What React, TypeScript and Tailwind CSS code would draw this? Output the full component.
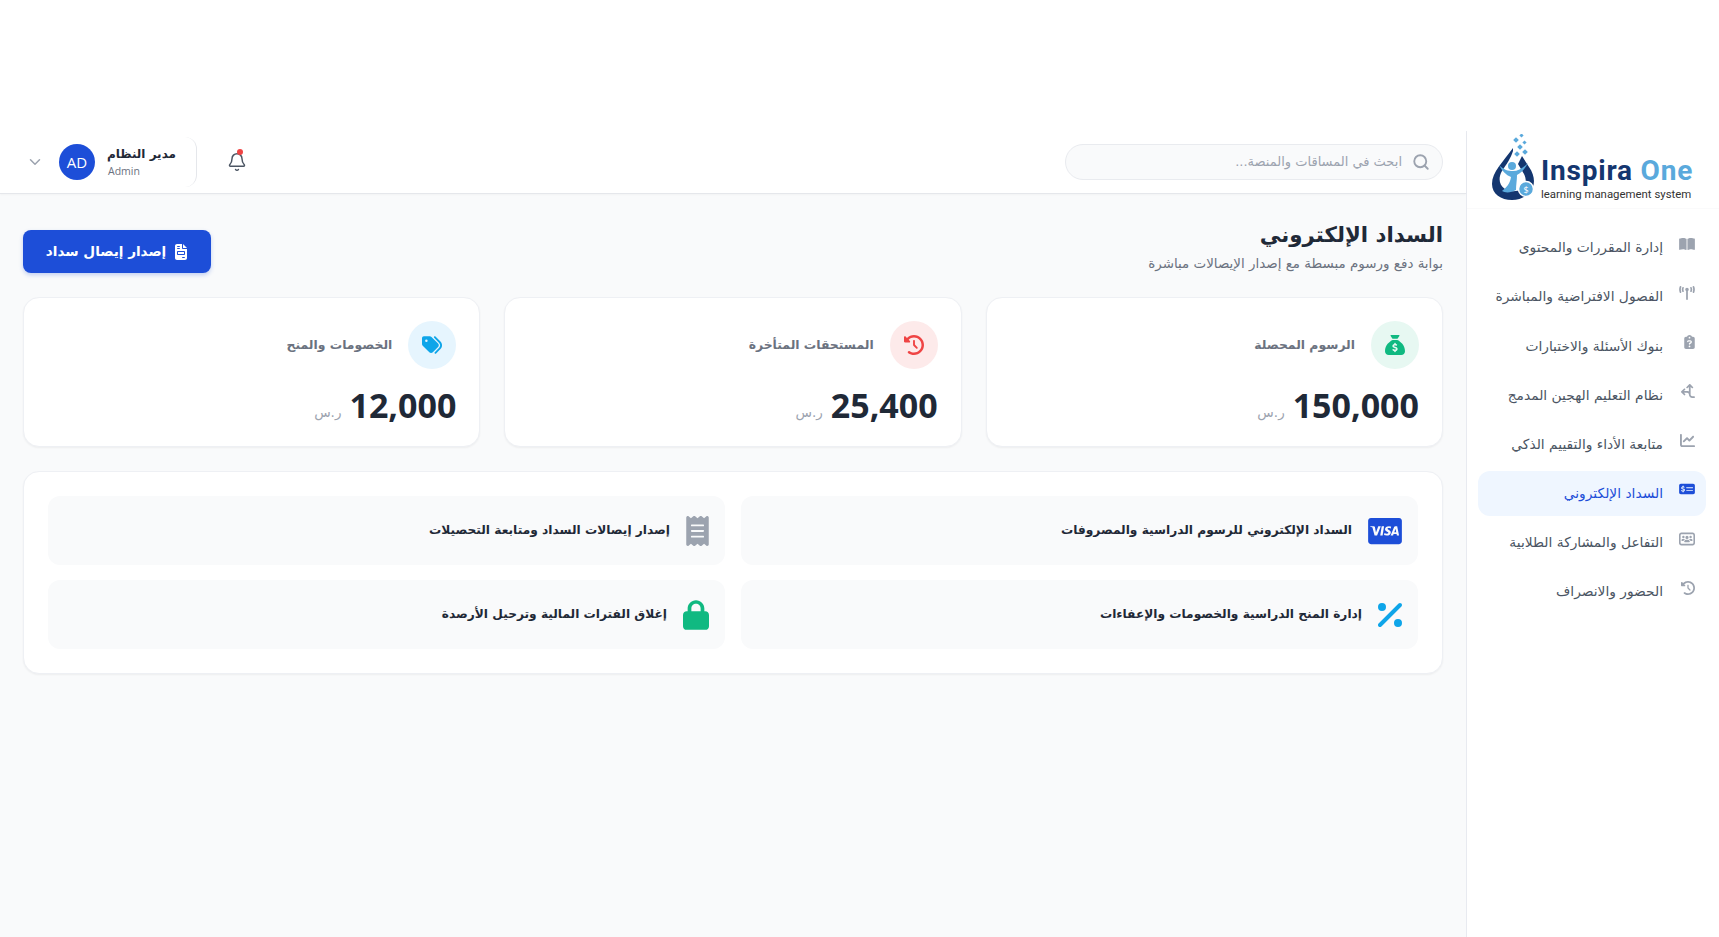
import React from 'react';
import { Search, ChevronDown, Bell } from 'lucide-react';
import {
  FaBookOpen,
  FaTowerBroadcast,
  FaClipboardQuestion,
  FaArrowsSplitUpAndLeft,
  FaChartLine,
  FaMoneyCheckDollar,
  FaUsersRectangle,
  FaClockRotateLeft,
  FaFileInvoice,
  FaSackDollar,
  FaTags,
  FaCcVisa,
  FaPercent,
  FaReceipt,
  FaLock,
} from 'react-icons/fa6';

const font = { fontFamily: '"DejaVu Sans", "Noto Sans", sans-serif' };
const latin = { fontFamily: '"Open Sans", sans-serif' };
const logoFont = { fontFamily: 'Roboto, sans-serif' };

const navItems = [
  { label: 'إدارة المقررات والمحتوى', icon: FaBookOpen, box: 'w-4 h-[14px]' },
  { label: 'الفصول الافتراضية والمباشرة', icon: FaTowerBroadcast, box: 'w-4 h-[14px]' },
  { label: 'بنوك الأسئلة والاختبارات', icon: FaClipboardQuestion, box: 'w-[11px] h-[14px]' },
  { label: 'نظام التعليم الهجين المدمج', icon: FaArrowsSplitUpAndLeft, box: 'w-[14px] h-[14px]' },
  { label: 'متابعة الأداء والتقييم الذكي', icon: FaChartLine, box: 'w-[15px] h-[15px]' },
  { label: 'السداد الإلكتروني', icon: FaMoneyCheckDollar, box: 'w-4 h-[14px]', active: true },
  { label: 'التفاعل والمشاركة الطلابية', icon: FaUsersRectangle, box: 'w-[17px] h-[14px]' },
  { label: 'الحضور والانصراف', icon: FaClockRotateLeft, box: 'w-[14px] h-[14px]' },
];

const stats = [
  { label: 'الرسوم المحصلة', value: '150,000', icon: FaSackDollar, circle: 'bg-[#e7f8f2]', color: 'text-[#10b981]' },
  { label: 'المستحقات المتأخرة', value: '25,400', icon: FaClockRotateLeft, circle: 'bg-[#fdeaea]', color: 'text-[#ef4444]' },
  { label: 'الخصومات والمنح', value: '12,000', icon: FaTags, circle: 'bg-[#e6f5fe]', color: 'text-[#0ea5e9]' },
];

const features = [
  { label: 'السداد الإلكتروني للرسوم الدراسية والمصروفات', icon: FaCcVisa, color: 'text-[#1d4ed8]', box: 'w-[34px] h-[30px]' },
  { label: 'إصدار إيصالات السداد ومتابعة التحصيلات', icon: FaReceipt, color: 'text-[#9ca3af]', box: 'w-[23px] h-[30px]' },
  { label: 'إدارة المنح الدراسية والخصومات والإعفاءات', icon: FaPercent, color: 'text-[#0ea5e9]', box: 'w-6 h-8' },
  { label: 'إغلاق الفترات المالية وترحيل الأرصدة', icon: FaLock, color: 'text-[#10b981]', box: 'w-[26px] h-[30px]' },
];

function Logo() {
  return (
    <div className="h-[78px] shrink-0 border-b border-[#fafafb] flex items-start justify-start pt-[3px] pr-[26px]">
      <div className="flex items-end gap-[1px] w-[203px]" dir="ltr">
        <svg width="50" height="68" viewBox="0 0 50 68" className="shrink-0">
          <path d="M23 14C13 28 2 38 2 50c0 10 9 16 20 16 9 0 18-5 21-13 2-6 1-13-4-20l-7-11-4 8 6 10c3 6 2 12-2 15-5 3-13 3-17 0-6-4-7-11-3-18 4-6 9-13 11-20z" fill="#14366f" />
          <circle cx="22" cy="32" r="4" fill="#5aa9dc" />
          <path d="M9 31c5 5 9 6 14 6 5 0 10-3 15-8-3 6-7 10-11 12 0 5-1 10-1 15-5 3-11 3-14 1 4-3 8-7 9-14-5-2-9-6-12-12z" fill="#5aa9dc" />
          <circle cx="36" cy="55" r="7.5" fill="#5aa9dc" stroke="#fff" strokeWidth="1.5" />
          <text x="36" y="58.5" textAnchor="middle" fontSize="9" fill="#fff" fontFamily="Open Sans, sans-serif">$</text>
          <rect x="24" y="4" width="4" height="4" transform="rotate(45 26 6)" fill="#5aa9dc" />
          <rect x="30" y="0" width="3" height="3" transform="rotate(45 31.5 1.5)" fill="#5aa9dc" />
          <rect x="33" y="7" width="3" height="3" transform="rotate(45 34.5 8.5)" fill="#5aa9dc" />
          <rect x="28" y="11" width="4" height="4" transform="rotate(45 30 13)" fill="#5aa9dc" />
          <rect x="33" y="16" width="4" height="4" transform="rotate(45 35 18)" fill="#5aa9dc" />
          <rect x="25" y="18" width="4" height="4" transform="rotate(45 27 20)" fill="#5aa9dc" />
        </svg>
        <div className="flex flex-col items-start mb-[1px]">
          <div className="text-[28px] leading-[32px] font-bold tracking-[0.8px] whitespace-nowrap" style={logoFont}>
            <span className="text-[#14366f]">Inspira </span>
            <span className="text-[#5aa9dc]">One</span>
          </div>
          <div className="text-[11.4px] leading-[14px] text-[#333] whitespace-nowrap" style={logoFont}>
            learning management system
          </div>
        </div>
      </div>
    </div>
  );
}

function Sidebar() {
  return (
    <aside className="w-[253px] shrink-0 bg-white border-l border-[#e8eaf0] flex flex-col">
      <Logo />
      <nav className="flex flex-col gap-[4.2px] pt-[16px] pr-[13px] pl-[11px]">
        {navItems.map((item) => {
          const Icon = item.icon;
          return (
            <a
              key={item.label}
              className={`h-[45px] rounded-xl flex items-center gap-4 pr-[11px] text-[13.8px] font-medium ${
                item.active ? 'bg-[#eff6ff] text-[#1d4ed8]' : 'text-[#4b5563]'
              }`}
            >
              <span className={`w-4 flex justify-start mt-[-8px] ${item.active ? 'text-[#1d4ed8]' : 'text-[#9ca3af]'}`}>
                <Icon className={item.box} />
              </span>
              <span className="whitespace-nowrap">{item.label}</span>
            </a>
          );
        })}
      </nav>
    </aside>
  );
}

function Header() {
  return (
    <header className="h-[63px] shrink-0 bg-white border-b border-[#e5e7eb] shadow-[0_1px_2px_rgba(0,0,0,0.03)] flex items-center justify-between pr-[23px] pl-[26px]">
      <div className="w-[378px] h-9 rounded-full bg-[#f9fafb] border border-[#e9ebef] flex items-center gap-[10px] pr-[12px]">
        <Search className="w-[18px] h-[18px] text-[#9ca3af]" strokeWidth={2.5} />
        <span className="text-[13px] text-[#9ca3af]">ابحث في المساقات والمنصة...</span>
      </div>
      <div className="flex items-center gap-[30px]">
        <div className="relative text-[#4b5563]">
          <Bell className="w-[20px] h-[20px]" strokeWidth={1.75} />
          <span className="absolute -top-[3px] right-[4px] w-[6px] h-[6px] rounded-full bg-[#ef4444]" />
        </div>
        <div className="flex items-center gap-[13px] h-[50px] border-r border-[#e5e7eb] pr-[20px] rounded-r-xl">
          <div className="flex flex-col w-[68px]">
            <span className="text-[12px] leading-[18px] font-bold text-[#1f2937] whitespace-nowrap">مدير النظام</span>
            <span className="text-[10.5px] leading-[16px] text-[#6b7280] text-left" style={latin}>Admin</span>
          </div>
          <div className="w-9 h-9 rounded-full bg-[#1d4ed8] text-white text-[15px] flex items-center justify-center" style={latin}>AD</div>
          <ChevronDown className="w-[18px] h-[18px] text-[#9ca3af] mr-[2px]" />
        </div>
      </div>
    </header>
  );
}

function StatCard({ item }: { item: (typeof stats)[number] }) {
  const Icon = item.icon;
  return (
    <div className="h-[150px] bg-white rounded-2xl border border-[#eef0f4] shadow-[0_1px_2px_rgba(0,0,0,0.05)] px-[23px] pt-[23px] flex flex-col">
      <div className="flex items-center gap-4">
        <div className={`w-12 h-12 rounded-full flex items-center justify-center ${item.circle} ${item.color}`}>
          <Icon className="w-5 h-5" />
        </div>
        <span className="text-[12.4px] font-semibold text-[#6b7280]">{item.label}</span>
      </div>
      <div className="flex items-end gap-[8px] mt-[16px]">
        <span className="text-[34px] leading-[40px] font-bold text-[#1f2937]" style={latin}>{item.value}</span>
        <span className="text-[13.5px] leading-[26px] text-[#9ca3af]">ر.س</span>
      </div>
    </div>
  );
}

export default function App() {
  return (
    <div dir="rtl" className="min-h-[937px] bg-white flex flex-col" style={font}>
      <div className="h-[131px] shrink-0" />
      <div className="flex h-[806px]">
        <Sidebar />
        <div className="flex-1 flex flex-col bg-[#f9fafb] min-w-0">
          <Header />
          <main className="px-[23px] pt-[25px]">
            <div className="flex items-start justify-between">
              <div>
                <h1 className="text-[21.3px] leading-[32px] font-bold text-[#1f2937]">السداد الإلكتروني</h1>
                <p className="text-[13.45px] leading-[20px] mt-[3px] text-[#6b7280]">بوابة دفع ورسوم مبسطة مع إصدار الإيصالات مباشرة</p>
              </div>
              <button className="w-[188px] h-[43px] mt-[11px] rounded-lg bg-[#1d4ed8] text-white text-[13.6px] font-bold flex items-center justify-center gap-2 shadow-[0_2px_4px_rgba(29,78,216,0.25)]">
                <FaFileInvoice className="w-[14px] h-4" />
                إصدار إيصال سداد
              </button>
            </div>
            <div className="grid grid-cols-3 gap-6 mt-[23px]">
              {stats.map((s) => (
                <StatCard key={s.label} item={s} />
              ))}
            </div>
            <div className="mt-6 bg-white rounded-2xl border border-[#eef0f4] shadow-[0_1px_2px_rgba(0,0,0,0.05)] p-6 grid grid-cols-2 gap-x-4 gap-y-[15px]">
              {features.map((f) => {
                const Icon = f.icon;
                return (
                  <div key={f.label} className="h-[69px] bg-[#f9fafb] rounded-xl flex items-center gap-4 px-4">
                    <span className={f.color}>
                      <Icon className={f.box} />
                    </span>
                    <span className="text-[12.2px] font-bold text-[#1f2937] mt-[-1px]">{f.label}</span>
                  </div>
                );
              })}
            </div>
          </main>
        </div>
      </div>
    </div>
  );
}
